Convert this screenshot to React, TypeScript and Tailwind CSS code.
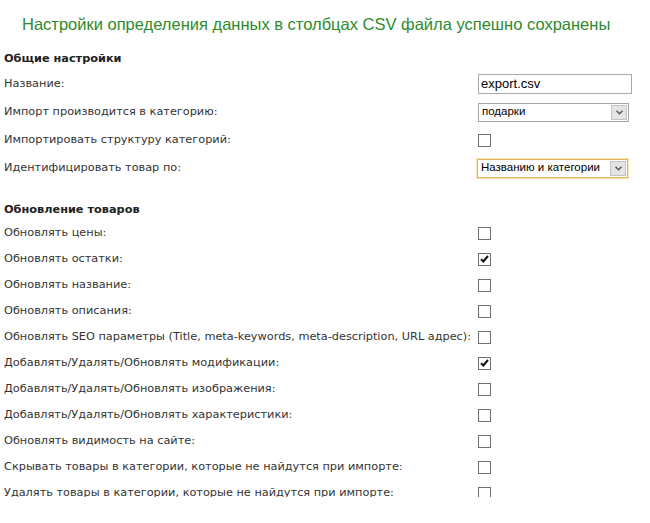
const FONT = { fontFamily: 'Verdana, "DejaVu Sans", sans-serif' }

const UPDATE_ROWS: { label: string; checked?: boolean }[] = [
  { label: 'Обновлять цены:' },
  { label: 'Обновлять остатки:', checked: true },
  { label: 'Обновлять название:' },
  { label: 'Обновлять описания:' },
  { label: 'Обновлять SEO параметры (Title, meta-keywords, meta-description, URL адрес):' },
  { label: 'Добавлять/Удалять/Обновлять модификации:', checked: true },
  { label: 'Добавлять/Удалять/Обновлять изображения:' },
  { label: 'Добавлять/Удалять/Обновлять характеристики:' },
  { label: 'Обновлять видимость на сайте:' },
  { label: 'Скрывать товары в категории, которые не найдутся при импорте:' },
  { label: 'Удалять товары в категории, которые не найдутся при импорте:' },
]

function Checkbox({ checked }: { checked?: boolean }) {
  return (
    <span className="flex h-[13px] w-[13px] items-center justify-center border border-[#707070] bg-white">
      {checked && (
        <svg width="9" height="8" viewBox="0 0 9 8">
          <path d="M1 4.2l2.3 2.3L8 1" fill="none" stroke="#111" strokeWidth="2" />
        </svg>
      )}
    </span>
  )
}

function Select({ value, focused }: { value: string; focused?: boolean }) {
  return (
    <div
      className={`flex h-[19px] w-[151px] items-center bg-white ${
        focused ? 'border border-[#e3b455] shadow-[0_0_0_1px_#f7e4b8]' : 'border border-[#a5a5a5]'
      }`}
    >
      <span className="flex-1 pl-[3px] text-[11.5px] text-black" style={{ fontFamily: '"Liberation Sans", Arial, sans-serif' }}>
        {value}
      </span>
      <span className="mr-[1px] flex h-[15px] w-[16px] items-center justify-center border border-[#c4c4c4] bg-[#e4e4e4]">
        <svg width="7" height="5" viewBox="0 0 7 5">
          <path d="M0.5 0.8L3.5 3.8L6.5 0.8" fill="none" stroke="#555" strokeWidth="1.4" />
        </svg>
      </span>
    </div>
  )
}

function Row({ label, h, children }: { label: string; h: string; children?: React.ReactNode }) {
  return (
    <div className={`grid grid-cols-[478px_1fr] items-center ${h}`}>
      <span className="whitespace-nowrap pl-[4px] text-[11.3px] text-[#333]">{label}</span>
      <div className="flex items-center">{children}</div>
    </div>
  )
}

export default function App() {
  return (
    <div className="h-[497px] w-[650px] overflow-hidden bg-white" style={FONT}>
      <h1
        className="flex h-[44px] items-center whitespace-nowrap pl-[22px] pt-[4px] text-[16.5px] font-normal text-[#2e8b2e]"
        style={{ fontFamily: '"Liberation Sans", Arial, sans-serif' }}
      >
        Настройки определения данных в столбцах CSV файла успешно сохранены
      </h1>

      <div className="flex h-[26px] items-center pl-[4px] pt-[4px] text-[11.3px] font-bold text-[#222]">Общие настройки</div>

      <Row label="Название:" h="h-[28px]">
        <div
          className="flex h-[20px] w-[154px] items-center border border-[#a9a9a9] bg-white pl-[2px] text-[13px] text-black"
          style={{ fontFamily: '"Liberation Sans", Arial, sans-serif' }}
        >
          export.csv
        </div>
      </Row>
      <Row label="Импорт производится в категорию:" h="h-[28px]">
        <Select value="подарки" />
      </Row>
      <Row label="Импортировать структуру категорий:" h="h-[28px]">
        <Checkbox />
      </Row>
      <Row label="Идентифицировать товар по:" h="h-[28px]">
        <div className="-ml-[1px]">
          <Select value="Названию и категории" focused />
        </div>
      </Row>

      <div className="mt-[14px] flex h-[24px] items-center pl-[4px] pt-[4px] text-[11.3px] font-bold text-[#222]">
        Обновление товаров
      </div>

      {UPDATE_ROWS.map((r) => (
        <Row key={r.label} label={r.label} h="h-[26px]">
          <Checkbox checked={r.checked} />
        </Row>
      ))}
    </div>
  )
}
